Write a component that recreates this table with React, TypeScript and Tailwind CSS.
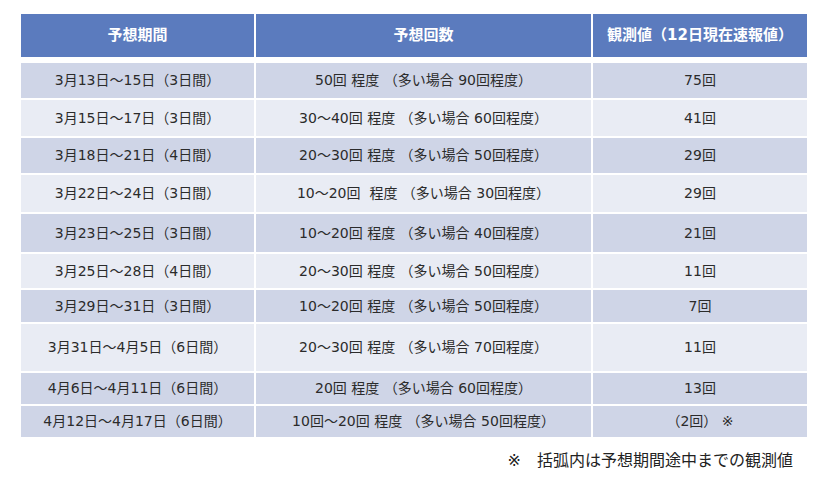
const rows: { period: string; forecast: string; observed: string; h: string; dark: boolean }[] = [
  { period: "3月13日～15日（3日間）", forecast: "50回 程度 （多い場合 90回程度）", observed: "75回", h: "h-[35px]", dark: true },
  { period: "3月15日～17日（3日間）", forecast: "30～40回 程度 （多い場合 60回程度）", observed: "41回", h: "h-[36px]", dark: false },
  { period: "3月18日～21日（4日間）", forecast: "20～30回 程度 （多い場合 50回程度）", observed: "29回", h: "h-[35px]", dark: true },
  { period: "3月22日～24日（3日間）", forecast: "10～20回\u00a0 程度 （多い場合 30回程度）", observed: "29回", h: "h-[37px]", dark: false },
  { period: "3月23日～25日（3日間）", forecast: "10～20回 程度 （多い場合 40回程度）", observed: "21回", h: "h-[38px]", dark: true },
  { period: "3月25日～28日（4日間）", forecast: "20～30回 程度 （多い場合 50回程度）", observed: "11回", h: "h-[34px]", dark: false },
  { period: "3月29日～31日（3日間）", forecast: "10～20回 程度 （多い場合 50回程度）", observed: "7回", h: "h-[32px]", dark: true },
  { period: "3月31日～4月5日（6日間）", forecast: "20～30回 程度 （多い場合 70回程度）", observed: "11回", h: "h-[47px]", dark: false },
  { period: "4月6日～4月11日（6日間）", forecast: "20回 程度 （多い場合 60回程度）", observed: "13回", h: "h-[31px]", dark: true },
  { period: "4月12日～4月17日（6日間）", forecast: "10回～20回 程度 （多い場合 50回程度）", observed: "（2回） ※", h: "h-[31px]", dark: true },
];

export default function App() {
  return (
    <div
      className="w-[826px] h-[479px] bg-white pt-[14px] pl-[21px] text-[#2b2b2b]"
      style={{ fontFamily: '"DejaVu Sans", "Noto Sans CJK JP", sans-serif' }}
    >
      <div className="w-[786px]">
        <div className="grid grid-cols-[233px_335px_214px] gap-x-[2px] h-[43px] text-white text-[15px] font-bold">
          <div className="flex items-center justify-center bg-[#5b7bbe]">予想期間</div>
          <div className="flex items-center justify-center bg-[#5b7bbe]">予想回数</div>
          <div className="flex items-center justify-center bg-[#5b7bbe]">観測値（12日現在速報値）</div>
        </div>
        <div className="flex flex-col gap-[2px] mt-[6px]">
          {rows.map((r) => (
            <div key={r.period} className={`grid grid-cols-[233px_335px_214px] gap-x-[2px] text-[14px] ${r.h}`}>
              <div className={`flex items-center justify-center ${r.dark ? "bg-[#cfd5e7]" : "bg-[#e9ecf4]"}`}>{r.period}</div>
              <div className={`flex items-center justify-center whitespace-pre ${r.dark ? "bg-[#cfd5e7]" : "bg-[#e9ecf4]"}`}>{r.forecast}</div>
              <div className={`flex items-center justify-center whitespace-pre ${r.dark ? "bg-[#cfd5e7]" : "bg-[#e9ecf4]"}`}>{r.observed}</div>
            </div>
          ))}
        </div>
        <p className="mt-[12px] pr-[14px] text-right text-[16px] leading-[24px] text-[#222]">※　括弧内は予想期間途中までの観測値</p>
      </div>
    </div>
  );
}
